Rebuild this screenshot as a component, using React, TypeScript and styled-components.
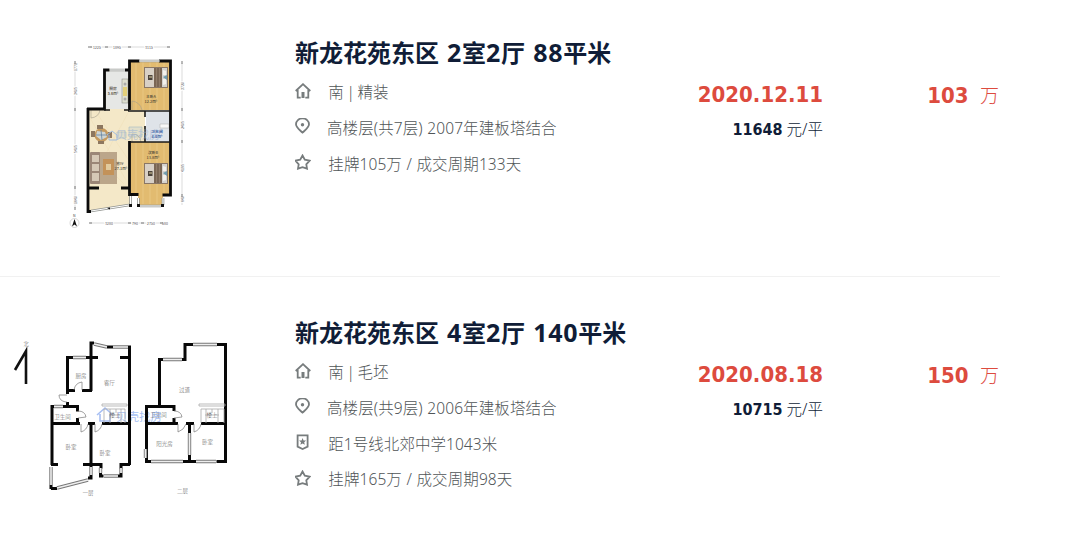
import React from "react";
import styled, { createGlobalStyle } from "styled-components";

type IconName = "home" | "pin" | "metro" | "star";

interface InfoLine {
  icon: IconName;
  text: string;
}

interface House {
  title: string;
  info: InfoLine[];
  date: string;
  unitPrice: string;
  total: string;
  plan: React.ReactNode;
}

const GlobalStyle = createGlobalStyle`
  body {
    margin: 0;
    background-color: #fff;
    overflow: hidden;
  }
`;

const List = styled.ul`
  display: flex;
  flex-direction: column;
  gap: 3px;
  width: 1000px;
  margin: 0;
  padding: 0;
  list-style: none;
  font-family: "Noto Sans", "Noto Sans CJK SC", sans-serif;
`;

const Item = styled.li`
  box-sizing: border-box;
  display: grid;
  grid-template-columns: 295px 1fr 126px 176px;
  height: 277px;
  padding-right: 1px;
  border-bottom: 1px solid #f1f1f1;
  &:last-child {
    height: 261px;
    border-bottom: none;
  }
`;

const Plan = styled.svg`
  display: block;
  width: 240px;
  height: 240px;
`;

const Info = styled.div`
  padding-top: 35px;
`;

const Title = styled.h3`
  margin: 0 0 4.7px;
  height: 34px;
  line-height: 34px;
  font-size: 24px;
  font-weight: 700;
  color: #101d37;
  white-space: nowrap;
  word-spacing: 1.8px;
`;

const Num = styled.span`
  font-size: 25px;
  letter-spacing: 0.7px;
`;

const Line = styled.div<{ $icon: IconName }>`
  display: flex;
  align-items: center;
  gap: ${(props) => (props.$icon === "pin" ? "16px" : "17.3px")};
  height: 35.8px;
  font-size: 15.5px;
  font-weight: 300;
  letter-spacing: ${(props) => (props.$icon === "metro" ? "0.05px" : "0.1px")};
  word-spacing: ${(props) => (props.$icon === "home" ? "-1.6px" : "0.4px")};
  color: #505557;
  white-space: nowrap;
`;

const IconSvg = styled.svg`
  flex: none;
  width: 16px;
  height: 16px;
  margin-bottom: 2px;
  fill: none;
  stroke: #777c7d;
  stroke-width: 1.8;
`;

const Deal = styled.div`
  padding-top: 80px;
  text-align: right;
  white-space: nowrap;
`;

const Red = styled.div`
  height: 30px;
  line-height: 30px;
  font-family: "DejaVu Sans Condensed", "DejaVu Sans", sans-serif;
  font-stretch: condensed;
  font-size: 22px;
  font-weight: 700;
  color: #dd4b3e;
`;

const Wan = styled.span`
  margin-left: 11.5px;
  font-family: "Noto Sans CJK SC", sans-serif;
  font-size: 19px;
  font-weight: 300;
`;

const UnitPrice = styled.div`
  margin-top: 7px;
  height: 24px;
  line-height: 24px;
  font-size: 15.5px;
  font-weight: 300;
  color: #101d37;
  b {
    font-family: "DejaVu Sans Condensed", "DejaVu Sans", sans-serif;
    font-stretch: condensed;
    font-weight: 700;
    font-size: 16px;
  }
`;

const Icon: React.FC<{ name: IconName }> = ({ name }) => (
  <IconSvg viewBox="0 0 16 16">
    {name === "home" && (
      <>
        <path d="M.7 8 8 1.2 15.3 8M2.7 7v7.6h3M13.3 7v7.6h-3" />
        <path d="M8 9v6" strokeWidth="3" />
      </>
    )}
    {name === "pin" && (
      <>
        <path d="M7.5 14.6C3.5 10.9 1 9.2 1 6.3a6.5 5.9 0 0 1 13 0C14 9.2 11.500 10.9 7.5 14.6Z" />
        <circle cx="7.5" cy="6.7" r="1.7" fill="#777c7d" stroke="none" />
      </>
    )}
    {name === "metro" && (
      <>
        <path d="M2.6 1.4h10v11.2L7.6 15l-5-2.4Z" />
        <path
          d="m7.6 4 1 2.4 2.5.2-1.9 1.6.6 2.5-2.2-1.3-2.2 1.3.6-2.5-1.9-1.6 2.5-.2Z"
          fill="#777c7d"
          stroke="none"
        />
      </>
    )}
    {name === "star" && (
      <path d="m7.5 1.5 2.3 4.2 4.9.9-3.4 3.7.7 4.4-4.5-1.5L3 14.7l.7-4.4L.3 6.6l4.9-.9Z" />
    )}
  </IconSvg>
);

const planFont = '"Noto Sans CJK SC", sans-serif';

const Bed: React.FC<{ y: number }> = ({ y }) => (
  <g transform={`translate(144 ${y})`}>
    <rect width="24" height="21" fill="#8a7766" />
    <path d="M1 1h9v19H1z" fill="#d8d0c6" />
    <path d="M10 1h8v19h-8z" fill="#7a6655" />
    <path d="M18 1h5v19h-5z" fill="#d5d3cf" />
    <path d="M12.5 1v19M15.5 1v19" stroke="#a08c79" strokeWidth=".6" />
    <rect x="4" y="8" width="4.5" height="5" fill="#4c443d" />
    <path d="M5 10h3" stroke="#d9cb9d" />
    <path d="m19 3 3 1v4h-3zM19 12h3v5l-3 1z" fill="#f4f1ec" />
    <path d="m19 10 4-2v5z" fill="#6f9cae" />
  </g>
);

const ColorPlan: React.FC = () => (
  <Plan viewBox="0 0 240 240">
    <path d="M88 110h16V70h25v40h16v32h-15v64l-42 5Z" fill="#f4e8c8" />
    <path d="M106 71h22v38h-22z" fill="#e6e7e5" />
    <path d="M130 62h39v48h-39zM130 142h39v52h-6v11h-25v-11h-8z" fill="#e2bb70" />
    <path
      d="M136 62v48M143 62v48M150 62v48M157 62v48M164 62v48M136 142v52M143 142v62M150 142v62M157 142v62M164 142v52"
      stroke="#ecca88"
      strokeWidth=".8"
    />
    <path d="M146 112h23v29h-23z" fill="#dfe3e9" />
    <path d="m90 118 36 62M90 150l34 34M96 112l34 50M128 113l-38 70" stroke="#eddbb0" strokeWidth=".4" />
    <Bed y={67} />
    <Bed y={163} />
    {/* sofa, rug and table */}
    <rect x="99" y="152" width="18" height="32" fill="#bba68a" />
    <rect x="103" y="159" width="11" height="16" fill="#c39259" />
    <path d="M106 164h5v6h-5z" fill="#e1ca9d" />
    <rect x="90" y="152" width="10" height="32" rx="1" fill="#9b8677" />
    <path d="M92 155h7v7h-7zM92 164h7v7h-7zM92 173h7v8h-7z" fill="#d6c8b6" />
    {/* dining set */}
    <circle cx="101.5" cy="135" r="7" fill="#c59a5f" />
    <path d="M97 125h6v4h-6zM91 131h4v6h-4zM108 132h4v6h-4zM98 141h6v3h-6z" fill="#8d775f" />
    <path d="m97 131 8 1 2 5-6 3-5-4z" fill="#cfd5d3" />
    <path d="m101 130 1 10M96 135h11" stroke="#6284a5" strokeWidth=".8" />
    <rect x="122" y="79" width="6" height="24" fill="#dedfcf" stroke="#82847f" strokeWidth=".5" />
    <path d="M123 87h4v9h-4z" fill="#e2cf7a" />
    <circle cx="125" cy="84" r="1.5" fill="#aaa" />
    <circle cx="125" cy="99" r="1.5" fill="#aaa" />
    <path d="M160 124h9v4h-9z" fill="#f8f8f8" stroke="#aaa" strokeWidth=".5" />
    <path d="M129 127h13v10h-13zM117 132h9v6h-9z" fill="#e2dfca" stroke="#a5b9c5" strokeWidth=".6" />
    {/* doors */}
    <path
      d="M91 110v8q8-1 9-8M132 110v-9q8 1 10 9M132 142v-8q8 0 9 8"
      fill="none"
      stroke="#a49d8c"
      strokeWidth=".6"
    />
    {/* walls */}
    <path
      d="M87 109h17.5V70h5M125 70h4.5V61h10M159 61h11.5v134h-8M129.5 70v40M88 108v103.5h3M129.5 141v53.5h9M88 188h11M121 188h9"
      fill="none"
      stroke="#0b0b0b"
      strokeWidth="2.8"
    />
    <path d="M104 110h6M124 110h5M128 111h42M145 111v6M145 126v16M130 142h40" fill="none" stroke="#171717" strokeWidth="1.6" />
    <path d="M139.5 61h20M110 70h15M138.5 198v7M163 198v7M140 206h21M91 211l38-6M130.5 196v8" stroke="#929591" strokeWidth="2.6" />
    <path d="M139.5 61h20M110 70h15M138.5 198v7M163 198v7M140 206h21M91 211l38-6M130.5 196v8" stroke="#fff" strokeWidth="1" />
    <path d="M129 204h3v3h-3zM137 204h3v3h-3zM161 204h3v3h-3zM107 208l3-.4v2z" fill="#111" />
    {/* dimensions */}
    <path d="M90 47h80M75 63v145M182 63v142M90 223h77" fill="none" stroke="#ccc" strokeWidth=".7" />
    <g fill="#555" fontFamily={planFont} fontSize="3.5" textAnchor="middle">
      <g stroke="#fff" strokeWidth="2" paintOrder="stroke">
        <text x="97" y="48.5">1225</text>
        <text x="117" y="48.5">1895</text>
        <text x="149" y="48.5">3115</text>
        <text x="109" y="224.5">3280</text>
        <text x="135" y="224.5">790</text>
        <text x="151" y="224.5">2750</text>
        <text x="165" y="224.5">580</text>
        <text transform="translate(76.5 67) rotate(-90)">1771</text>
        <text transform="translate(76.5 91) rotate(-90)">3405</text>
        <text transform="translate(76.5 149) rotate(-90)">5405</text>
        <text transform="translate(76.5 200) rotate(-90)">1840</text>
        <text transform="translate(183.5 86) rotate(-90)">3720</text>
        <text transform="translate(183.5 125) rotate(-90)">2405</text>
        <text transform="translate(183.5 168) rotate(-90)">4195</text>
        <text transform="translate(183.5 199) rotate(-90)">840</text>
      </g>
      <g fontSize="3.8" fontWeight="500" fill="#4a4435">
        <text x="113" y="90">厨房</text>
        <text x="113" y="95">5.6m²</text>
        <text x="151" y="98">主卧A</text>
        <text x="151" y="103">12.2m²</text>
        <text x="120" y="165">客厅</text>
        <text x="121" y="170">27.1m²</text>
        <text x="153" y="154">次卧B</text>
        <text x="153" y="159">13.8m²</text>
      </g>
      <g fontSize="3.8" fontWeight="700" fill="#3558a0">
        <text x="157" y="133">卫生间</text>
        <text x="157" y="138">4.6m²</text>
      </g>
    </g>
    <path
      d="M88 47h4M105 47h3M128 47h3M167 47h3M75 61v3M75 108v3M75 186v3M75 207v3M182 61v3M182 108v3M182 140v3M182 194v3M89 223h3M128 223h3M141 223h3M160 223h3"
      stroke="#777"
    />
    <path d="m107 135 5-4 5 4v5h-8v-5" fill="none" stroke="#9fbbe0" />
    <text x="116" y="139" fontFamily={planFont} fontSize="11" fill="#9ab3d6" opacity=".6">
      贝壳找房
    </text>
    <circle cx="74.5" cy="223" r="4.5" fill="none" stroke="#bbb" strokeWidth=".6" />
    <path d="m74.5 219 2.5 7.5-2.5-2-2.5 2z" fill="#111" />
    <text x="73" y="217" fontFamily={planFont} fontSize="3.5" fill="#333">N</text>
  </Plan>
);

const LinePlan: React.FC = () => (
  <Plan viewBox="0 280 240 240">
    <path d="M15 370 26 351v33" fill="none" stroke="#111" strokeWidth="2.6" />
    {/* watermark sits under the drawing */}
    <path d="m97 415 8-7 8 7M100 414v7h10v-7" fill="none" stroke="#a7bff3" strokeWidth="1.6" />
    <text x="116" y="420.5" fontFamily={planFont} fontSize="11.5" fill="#a7bff3">
      贝壳找房
    </text>
    {/* first floor */}
    <path
      d="M73 357.5h-5.5V394M86 357.5h12M67.5 402v4M66 390.5h9M82 390.5h10M91 391v-48h3M107 347h6M128 347h1.5v118M120 357.5h10M54 406.5h-2V465M63 406.5h14.5v5M77.5 418v6M52 423.5h28M88 423.5h7M102 423.5h28M91 424v43M51 464.5h7M83 464.5h18v4M130 464.5h-9v4M91 475v3h-3M51 488.5h6M51 485v4M100.5 473v3h3M121 473v3h-3"
      fill="none"
      stroke="#080808"
      strokeWidth="3"
    />
    <path
      d="m94 344 13 3M113 347h15M73 357.5h13M54 406.5h9M51 467v18M57 488l31-8M91 467v8M100.5 468v5M121 468v5M104 476h14"
      fill="none"
      stroke="#777"
      strokeWidth="3.4"
    />
    <path
      d="m94 344 13 3M113 347h15M73 357.5h13M54 406.5h9M51 467v18M57 488l31-8M91 467v8M100.5 468v5M121 468v5M104 476h14"
      fill="none"
      stroke="#eee"
      strokeWidth="1.6"
    />
    {/* second floor */}
    <path
      d="M193 344.5h-8v15h-3M217 344.5h8.5v117h-9M163 359.5h-3.5v47M174 411v-4.5h-27.5v55h5M174 418v5M146 423.5h32M186 423.5h8M201 423.5h25M189.5 424v9M189.5 455v6M183 461.5h13"
      fill="none"
      stroke="#080808"
      strokeWidth="3"
    />
    <path
      d="M193 344.5h24M163 359.5h19M151 461.5h32M196 461.5h20M189.5 433v22M145.5 449v9"
      fill="none"
      stroke="#777"
      strokeWidth="3.4"
    />
    <path
      d="M193 344.5h24M163 359.5h19M151 461.5h32M196 461.5h20M189.5 433v22M145.5 449v9"
      fill="none"
      stroke="#eee"
      strokeWidth="1.6"
    />
    {/* stairs */}
    <path
      d="M102 404h25v2h-25zM104 423v-14h21v14M110 409v14M116 409v4M121 409v14M109 415h11M199 404h26v2h-26zM201 423v-14h23v14M206 409v14M212 409v4M218 409v14M205 415h14"
      fill="none"
      stroke="#aaa"
      strokeWidth=".8"
    />
    {/* doors */}
    <path
      d="M82 390v-8q-7 1-8 8M67 402h-1q-7-1-7-7h8M78 411q7 0 8 6l-8 1M81 424v8q6-2 7-8M95 424v8q6-2 7-8M174 411q7 0 8 6l-8 1M178 424v8q6-2 8-8M194 424v8q6-2 7-8"
      fill="none"
      stroke="#888"
      strokeWidth=".8"
    />
    <g
      fill="#555"
      fontFamily={`"Liberation Serif", ${planFont}`}
      fontSize="5.5"
      fontWeight="300"
      textAnchor="middle"
    >
      <text x="26" y="346">北</text>
      <text x="81" y="378">厨房</text>
      <text x="109.5" y="385">客厅</text>
      <text x="62.5" y="419">卫生间</text>
      <text x="115" y="417">楼上</text>
      <text x="71" y="449">卧室</text>
      <text x="105" y="455">卧室</text>
      <text x="88" y="494.5">一层</text>
      <text x="184.5" y="392">过道</text>
      <text x="158.5" y="417">卫生间</text>
      <text x="212" y="417">楼上</text>
      <text x="164.5" y="446">阳光房</text>
      <text x="207.5" y="444">卧室</text>
      <text x="182.5" y="493">二层</text>
    </g>
  </Plan>
);

const houses: House[] = [
  {
    title: "新龙花苑东区 2室2厅 88平米",
    info: [
      { icon: "home", text: "南 | 精装" },
      { icon: "pin", text: "高楼层(共7层) 2007年建板塔结合" },
      { icon: "star", text: "挂牌105万 / 成交周期133天" },
    ],
    date: "2020.12.11",
    unitPrice: "11648",
    total: "103",
    plan: <ColorPlan />,
  },
  {
    title: "新龙花苑东区 4室2厅 140平米",
    info: [
      { icon: "home", text: "南 | 毛坯" },
      { icon: "pin", text: "高楼层(共9层) 2006年建板塔结合" },
      { icon: "metro", text: "距1号线北郊中学1043米" },
      { icon: "star", text: "挂牌165万 / 成交周期98天" },
    ],
    date: "2020.08.18",
    unitPrice: "10715",
    total: "150",
    plan: <LinePlan />,
  },
];

// digits are set a little larger than the characters around them
const renderTitle = (title: string) =>
  title
    .split(/(\d+)/)
    .map((part, index) =>
      /^\d+$/.test(part) ? <Num key={index}>{part}</Num> : part
    );

const App: React.FC = () => {
  return (
    <>
      <GlobalStyle />
      <List>
        {houses.map((house) => (
          <Item key={house.title}>
            {house.plan}
            <Info>
              <Title>{renderTitle(house.title)}</Title>
              {house.info.map((line) => (
                <Line key={line.icon} $icon={line.icon}>
                  <Icon name={line.icon} />
                  {line.text}
                </Line>
              ))}
            </Info>
            <Deal>
              <Red>{house.date}</Red>
              <UnitPrice>
                <b>{house.unitPrice}</b> 元/平
              </UnitPrice>
            </Deal>
            <Deal>
              <Red>
                {house.total}
                <Wan>万</Wan>
              </Red>
            </Deal>
          </Item>
        ))}
      </List>
    </>
  );
};

export default App;
